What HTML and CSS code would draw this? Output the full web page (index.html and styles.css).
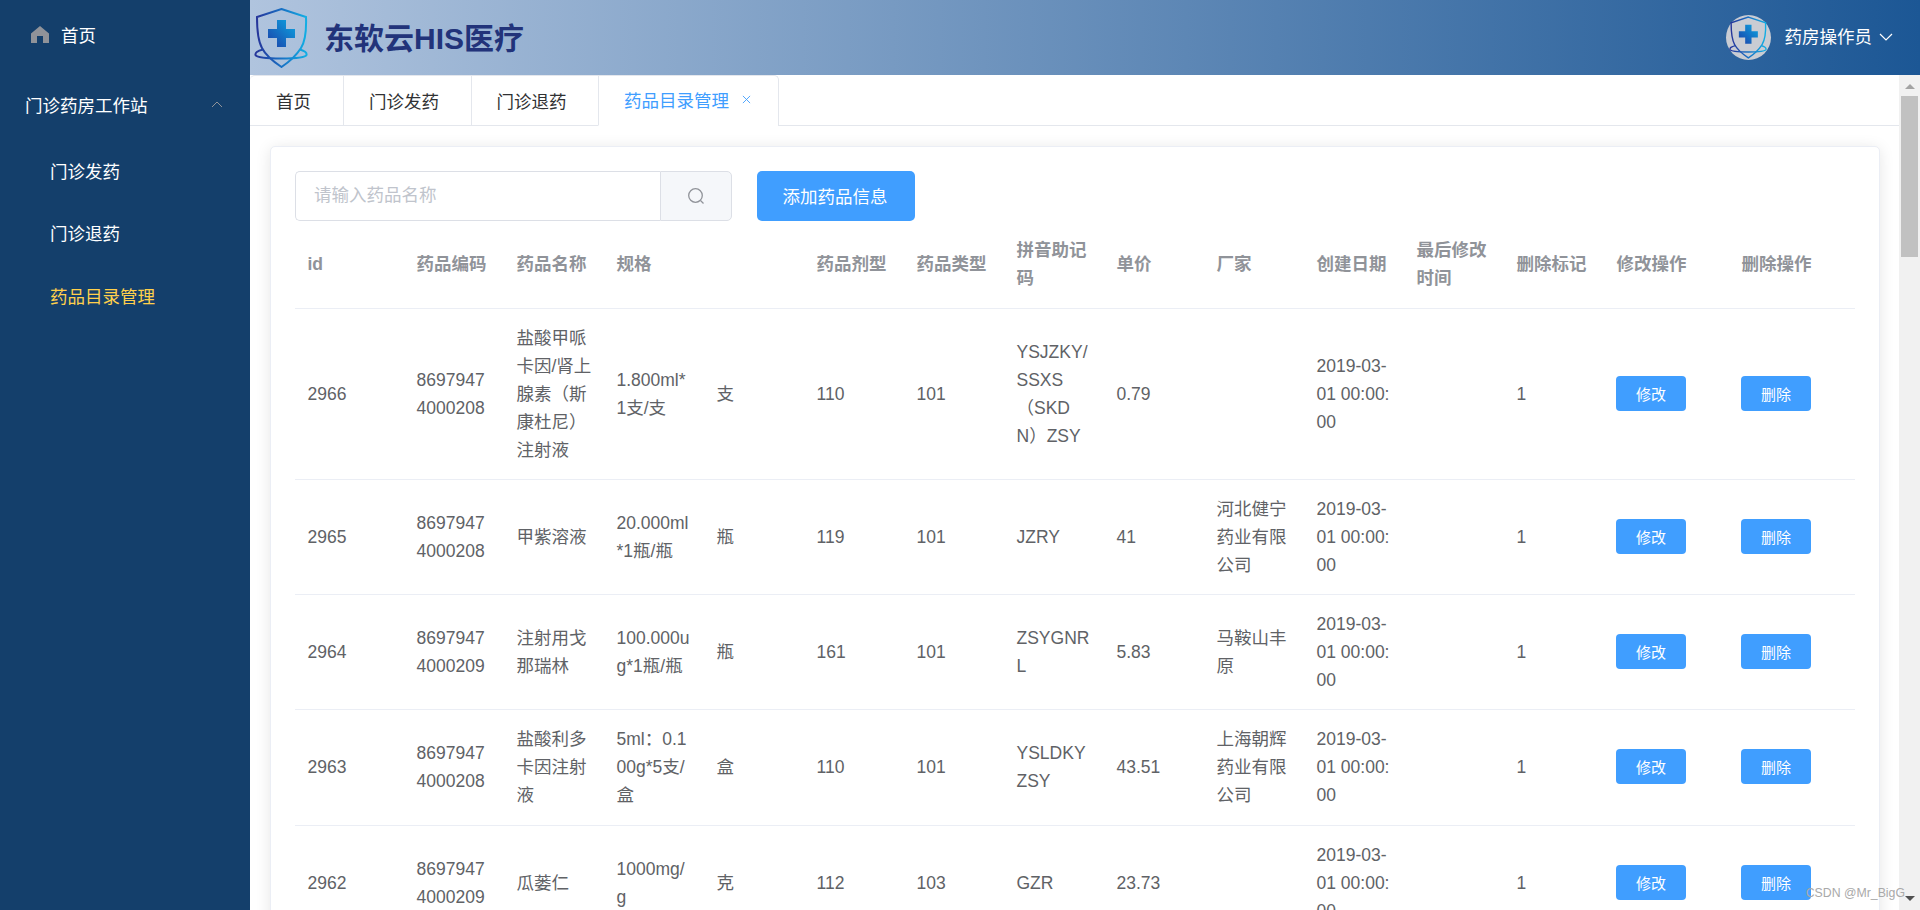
FILE: index.html
```html
<!DOCTYPE html>
<html>
<head>
  <title>东软云HIS医疗</title>
  <link rel="stylesheet" href="styles.css">
</head>
<body>
  <svg class="defs" width="0" height="0">
    <defs>
      <linearGradient id="shieldLine" x1="0" y1="0" x2="1" y2="0">
        <stop offset="0" stop-color="#26359a"/>
        <stop offset="0.5" stop-color="#1870c4"/>
        <stop offset="1" stop-color="#12aee4"/>
      </linearGradient>
      <linearGradient id="shieldCross" x1="0" y1="1" x2="1" y2="0">
        <stop offset="0" stop-color="#1c3fa8"/>
        <stop offset="1" stop-color="#0ca6e2"/>
      </linearGradient>
      <symbol id="shield" viewBox="0 0 54 60">
        <path d="M27.500 1 L52 9 C52.500 22 52 32 47 40 C42 48 35 54 27.500 59 C20 54 12 48 8 40 C3.500 32 3 22 3 9 Z" fill="none" stroke="url(#shieldLine)" stroke-width="2"/>
        <path d="M9 41.500 C3 43 1 45 1.500 47 C3 50 15 50.500 27.500 50.500 C40 50.500 51 50 52.500 47 C53 45 51 43 46 41.500" fill="none" stroke="url(#shieldLine)" stroke-width="2"/>
        <path d="M23 12 H32 V21 H41 V30 H32 V39 H23 V30 H14 V21 H23 Z" fill="url(#shieldCross)"/>
      </symbol>
    </defs>
  </svg>

  <!-- Sidebar -->
  <aside class="sidebar">
    <div class="menu-item home-item">
      <svg class="home-icon" viewBox="0 0 18 17"><path d="M9 0 L18 7.500 V17 H12 V10 H6 V17 H0 V7.500 Z" fill="#909399"/></svg>
      首页
    </div>
    <div class="menu-item group-title">
      门诊药房工作站
      <svg class="group-arrow" viewBox="0 0 12 7"><path d="M1 6 L6 1 L11 6" fill="none" stroke="#909399" stroke-width="1"/></svg>
    </div>
    <div class="menu-item sub-item">门诊发药</div>
    <div class="menu-item sub-item">门诊退药</div>
    <div class="menu-item sub-item selected">药品目录管理</div>
  </aside>

  <div class="page">
    <!-- Header -->
    <header class="topbar">
      <div class="brand">
        <svg class="brand-logo"><use href="#shield"/></svg>
        <span class="brand-name">东软云HIS医疗</span>
      </div>
      <div class="user">
        <span class="avatar"><svg class="avatar-logo"><use href="#shield"/></svg></span>
        <span class="user-name">药房操作员</span>
        <svg class="user-arrow" viewBox="0 0 14 8"><path d="M1 1 L7 7 L13 1" fill="none" stroke="#fff" stroke-width="1.200"/></svg>
      </div>
    </header>

    <div class="workspace">
      <main class="main">
        <!-- Tabs -->
        <div class="tabs">
          <div class="tab-list">
            <div class="tab first">首页</div>
            <div class="tab">门诊发药</div>
            <div class="tab">门诊退药</div>
            <div class="tab active">
              药品目录管理
              <svg class="tab-close" viewBox="0 0 10 10"><path d="M1 1 L9 9 M9 1 L1 9" stroke="#409eff" stroke-width="1"/></svg>
            </div>
          </div>
        </div>

        <!-- Drug list -->
        <div class="card">
          <div class="toolbar">
            <div class="search">
              <div class="search-input">请输入药品名称</div>
              <div class="search-btn">
                <svg viewBox="0 0 18 18"><circle cx="8.500" cy="8.500" r="6.800" fill="none" stroke="#909399" stroke-width="1.300"/><path d="M13.500 13.500 L16.500 16.500" stroke="#909399" stroke-width="1.300"/></svg>
              </div>
            </div>
            <button class="btn-add">添加药品信息</button>
          </div>

          <table class="drug-table">
            <colgroup>
              <col class="col-id"><col span="12" class="col-std"><col class="col-edit"><col class="col-del">
            </colgroup>
            <thead>
              <tr>
                <th>id</th><th>药品编码</th><th>药品名称</th><th>规格</th><th></th><th>药品剂型</th><th>药品类型</th><th>拼音助记码</th><th>单价</th><th>厂家</th><th>创建日期</th><th>最后修改时间</th><th>删除标记</th><th>修改操作</th><th>删除操作</th>
              </tr>
            </thead>
            <tbody>
              <tr>
                <td>2966</td><td>86979474000208</td><td>盐酸甲哌卡因/肾上腺素（斯康杜尼）注射液</td><td>1.800ml*1支/支</td><td>支</td><td>110</td><td>101</td><td>YSJZKY/SSXS（SKD<br>N）ZSY</td><td>0.79</td><td></td><td>2019-03-01 00:00:00</td><td></td><td>1</td>
                <td><button class="btn-row">修改</button></td><td><button class="btn-row">删除</button></td>
              </tr>
              <tr>
                <td>2965</td><td>86979474000208</td><td>甲紫溶液</td><td>20.000ml*1瓶/瓶</td><td>瓶</td><td>119</td><td>101</td><td>JZRY</td><td>41</td><td>河北健宁药业有限公司</td><td>2019-03-01 00:00:00</td><td></td><td>1</td>
                <td><button class="btn-row">修改</button></td><td><button class="btn-row">删除</button></td>
              </tr>
              <tr>
                <td>2964</td><td>86979474000209</td><td>注射用戈那瑞林</td><td>100.000ug*1瓶/瓶</td><td>瓶</td><td>161</td><td>101</td><td>ZSYGNRL</td><td>5.83</td><td>马鞍山丰原</td><td>2019-03-01 00:00:00</td><td></td><td>1</td>
                <td><button class="btn-row">修改</button></td><td><button class="btn-row">删除</button></td>
              </tr>
              <tr>
                <td>2963</td><td>86979474000208</td><td>盐酸利多卡因注射液</td><td>5ml：0.100g*5支/盒</td><td>盒</td><td>110</td><td>101</td><td>YSLDKYZSY</td><td>43.51</td><td>上海朝辉药业有限公司</td><td>2019-03-01 00:00:00</td><td></td><td>1</td>
                <td><button class="btn-row">修改</button></td><td><button class="btn-row">删除</button></td>
              </tr>
              <tr>
                <td>2962</td><td>86979474000209</td><td>瓜蒌仁</td><td>1000mg/g</td><td>克</td><td>112</td><td>103</td><td>GZR</td><td>23.73</td><td></td><td>2019-03-01 00:00:00</td><td></td><td>1</td>
                <td><button class="btn-row">修改</button></td><td><button class="btn-row">删除</button></td>
              </tr>
            </tbody>
          </table>
        </div>
      </main>

      <!-- Scrollbar -->
      <div class="scrollbar">
        <span class="scroll-up"></span>
        <span class="scroll-thumb"></span>
      </div>
    </div>
  </div>

  <div class="watermark">CSDN @Mr_BigG</div>
  <span class="scroll-down"></span>
</body>
</html>
```

FILE: styles.css
```css
* {
  box-sizing: border-box;
}

html,
body {
  height: 100%;
}

body {
  display: flex;
  margin: 0;
  overflow: hidden;
  font-family: "Liberation Sans", "Noto Sans CJK SC", sans-serif;
  font-size: 17.5px;
  color: #606266;
  background-color: #fff;
}

.defs {
  position: absolute;
}

/* Sidebar */
.sidebar {
  flex: 0 0 250px;
  background-color: #143f6b;
  color: #fff;
}

.menu-item {
  display: flex;
  align-items: center;
  padding-bottom: 2px;
}

.home-item {
  height: 70px;
  padding-left: 31px;
}

.home-icon {
  width: 18px;
  height: 17px;
  margin-right: 12px;
}

.group-title {
  position: relative;
  height: 70px;
  padding-left: 25px;
}

.group-arrow {
  position: absolute;
  left: 211px;
  top: 31px;
  width: 12px;
  height: 7px;
}

.sub-item {
  height: 62.5px;
  padding-left: 50px;
}

.selected {
  color: #ffd04b;
}

/* Header */
.page {
  display: flex;
  flex: 1;
  flex-direction: column;
  min-width: 0;
}

.topbar {
  display: flex;
  flex: 0 0 75px;
  align-items: center;
  justify-content: space-between;
  padding: 0 27px 0 4px;
  background: linear-gradient(90deg, #b0c4de, #1c5795);
}

.brand {
  display: flex;
  align-items: center;
}

.brand-logo {
  width: 54px;
  height: 60px;
}

.brand-name {
  margin-left: 16px;
  padding-bottom: 4px;
  font-size: 30px;
  font-weight: bold;
  color: #22337a;
}

.user {
  display: flex;
  align-items: center;
  color: #fff;
}

.avatar {
  display: flex;
  align-items: center;
  justify-content: center;
  width: 45px;
  height: 45px;
  border-radius: 50%;
  background-color: #c9ccd3;
}

.avatar-logo {
  width: 38px;
  height: 43px;
}

.user-name {
  margin-left: 14px;
  padding-bottom: 4px;
}

.user-arrow {
  width: 14px;
  height: 8px;
  margin-left: 7px;
  margin-bottom: 2px;
}

/* Content */
.workspace {
  display: flex;
  flex: 1;
  min-height: 0;
}

.main {
  flex: 1;
  min-width: 0;
  overflow: hidden;
}

.tabs {
  height: 51px;
  border-bottom: 1px solid #e4e7ed;
}

.tab-list {
  display: inline-flex;
  height: 51px;
  border: 1px solid #e4e7ed;
  border-bottom: none;
  border-left: none;
  border-radius: 5px 5px 0 0;
  color: #303133;
}

.tab {
  display: flex;
  align-items: center;
  padding: 0 31.5px 2px 25px;
  border-left: 1px solid #e4e7ed;
}

.tab.first {
  padding-right: 32px;
  padding-left: 26px;
  border-left: none;
}

.tab.active {
  padding-right: 26.5px;
  border-bottom: 1px solid #fff;
  color: #409eff;
}

.tab-close {
  width: 9px;
  height: 9px;
  margin-left: 13px;
}

.card {
  margin: 20px 19px 0 20px;
  padding: 24px;
  background-color: #fff;
  border: 1px solid #ebeef5;
  border-radius: 5px;
  box-shadow: 0 2px 15px rgba(0, 0, 0, 0.1);
}

.toolbar {
  display: flex;
  gap: 25px;
}

.search {
  display: flex;
  width: 437px;
  height: 50px;
}

.search-input {
  flex: 1;
  padding-left: 18px;
  line-height: 47px;
  color: #c0c4cc;
  border: 1px solid #dcdfe6;
  border-right: none;
  border-radius: 5px 0 0 5px;
}

.search-btn {
  display: flex;
  flex: 0 0 72px;
  align-items: center;
  justify-content: center;
  background-color: #f5f7fa;
  border: 1px solid #dcdfe6;
  border-radius: 0 5px 5px 0;
}

.search-btn svg {
  width: 18px;
  height: 18px;
}

button {
  font-family: inherit;
  color: #fff;
  background-color: #409eff;
  border: none;
  cursor: pointer;
}

.btn-add {
  width: 158px;
  height: 50px;
  padding: 0 2px 2px 0;
  font-size: 17.5px;
  border-radius: 5px;
}

.btn-row {
  display: block;
  width: 70px;
  height: 35px;
  margin: -1px 0 1px -0.5px;
  padding: 0;
  font-size: 15px;
  border-radius: 4px;
}

/* Table */
.drug-table {
  width: 1560px;
  border-spacing: 0;
  table-layout: fixed;
  word-break: break-all;
}

.col-id {
  width: 109px;
}

.col-std {
  width: 100px;
}

.col-edit {
  width: 125px;
}

.col-del {
  width: 126px;
}

.drug-table th,
.drug-table td {
  padding: 15px 12.5px;
  line-height: 28px;
  text-align: left;
  vertical-align: middle;
  border-bottom: 1px solid #ebeef5;
}

.drug-table th {
  padding-bottom: 16px;
  font-weight: bold;
  color: #909399;
}

.drug-table tbody tr:nth-child(4) td {
  padding-bottom: 16px;
}

/* Scrollbar */
.scrollbar {
  display: flex;
  flex: 0 0 21px;
  flex-direction: column;
  align-items: center;
  background-color: #f1f1f1;
}

.scroll-up {
  width: 0;
  height: 0;
  margin-top: 9px;
  border-right: 5px solid transparent;
  border-bottom: 5px solid #a3a3a3;
  border-left: 5px solid transparent;
}

.scroll-thumb {
  width: 17px;
  height: 161px;
  margin-top: 7px;
  background-color: #c1c1c1;
}

.scroll-down {
  position: absolute;
  left: 1905px;
  top: 896px;
  width: 0;
  height: 0;
  border-top: 5px solid #505050;
  border-right: 5px solid transparent;
  border-left: 5px solid transparent;
}

.watermark {
  position: absolute;
  right: 15px;
  top: 885px;
  font-size: 12.3px;
  line-height: 16px;
  color: #a9a9a9;
  white-space: nowrap;
}
```
